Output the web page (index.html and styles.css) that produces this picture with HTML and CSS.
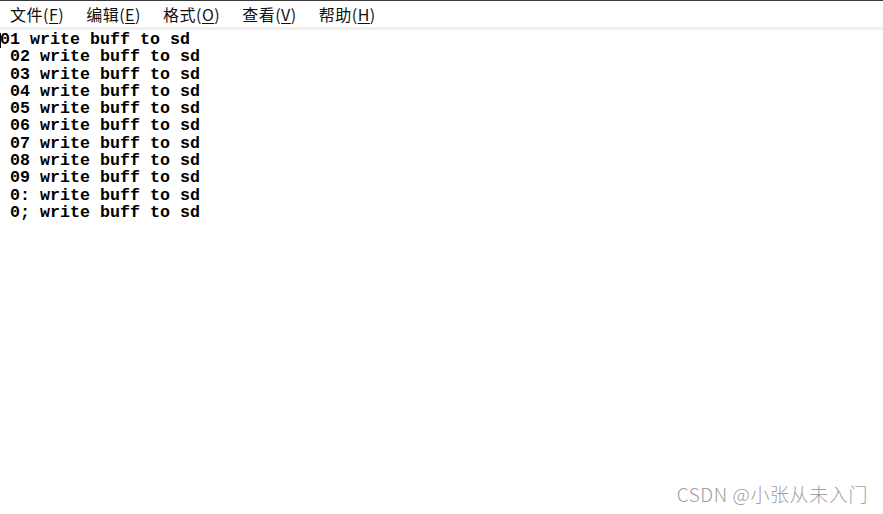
FILE: index.html
```html
<!DOCTYPE html>
<html>
<head>
<meta charset="utf-8">
<link rel="stylesheet" href="styles.css">
</head>
<body>
<div class="window">
  <div class="menubar">
    <span class="menu">文件(<u>F</u>)</span>
    <span class="menu">编辑(<u>E</u>)</span>
    <span class="menu">格式(<u>O</u>)</span>
    <span class="menu">查看(<u>V</u>)</span>
    <span class="menu">帮助(<u>H</u>)</span>
  </div>
  <div class="divider"></div>
  <div class="editor">
<pre class="text"><span class="caret"></span>01 write buff to sd
 02 write buff to sd
 03 write buff to sd
 04 write buff to sd
 05 write buff to sd
 06 write buff to sd
 07 write buff to sd
 08 write buff to sd
 09 write buff to sd
 0: write buff to sd
 0; write buff to sd</pre>
    <div class="watermark">CSDN @小张从未入门</div>
  </div>
</div>
</body>
</html>
```

FILE: styles.css
```css
html, body {
  margin: 0;
  padding: 0;
  background: #ffffff;
}
.window {
  width: 883px;
  height: 514px;
  display: flex;
  flex-direction: column;
  border-top: 1px solid #3a3a3a;
  box-sizing: border-box;
}
.menubar {
  height: 26px;
  display: flex;
  align-items: center;
  padding-left: 10px;
  gap: 22px;
  font-family: "Noto Sans CJK SC", "Noto Sans", sans-serif;
  font-size: 16px;
  color: #111;
  background: #fff;
}
.menu {
  letter-spacing: 0.5px;
}
.menu u {
  text-decoration: underline;
  text-underline-offset: 2px;
}
.divider {
  height: 3px;
  background: #f0f0f0;
}
.editor {
  flex: 1;
  display: flex;
  flex-direction: column;
  justify-content: space-between;
  padding-bottom: 7px;
}
.text {
  margin: 0;
  padding-top: 1px;
  font-family: "Liberation Mono", "DejaVu Sans Mono", monospace;
  font-weight: bold;
  font-size: 16.67px;
  line-height: 17.3px;
  color: #000;
  position: relative;
}
.caret {
  position: absolute;
  left: 0;
  top: 3px;
  width: 1px;
  height: 15px;
  background: #000;
}
.watermark {
  align-self: flex-end;
  margin-right: 15px;
  font-family: "Noto Sans CJK SC", "Noto Sans", sans-serif;
  font-size: 19px;
  font-weight: 300;
  letter-spacing: 0.6px;
  color: #a0a0a0;
}
```
